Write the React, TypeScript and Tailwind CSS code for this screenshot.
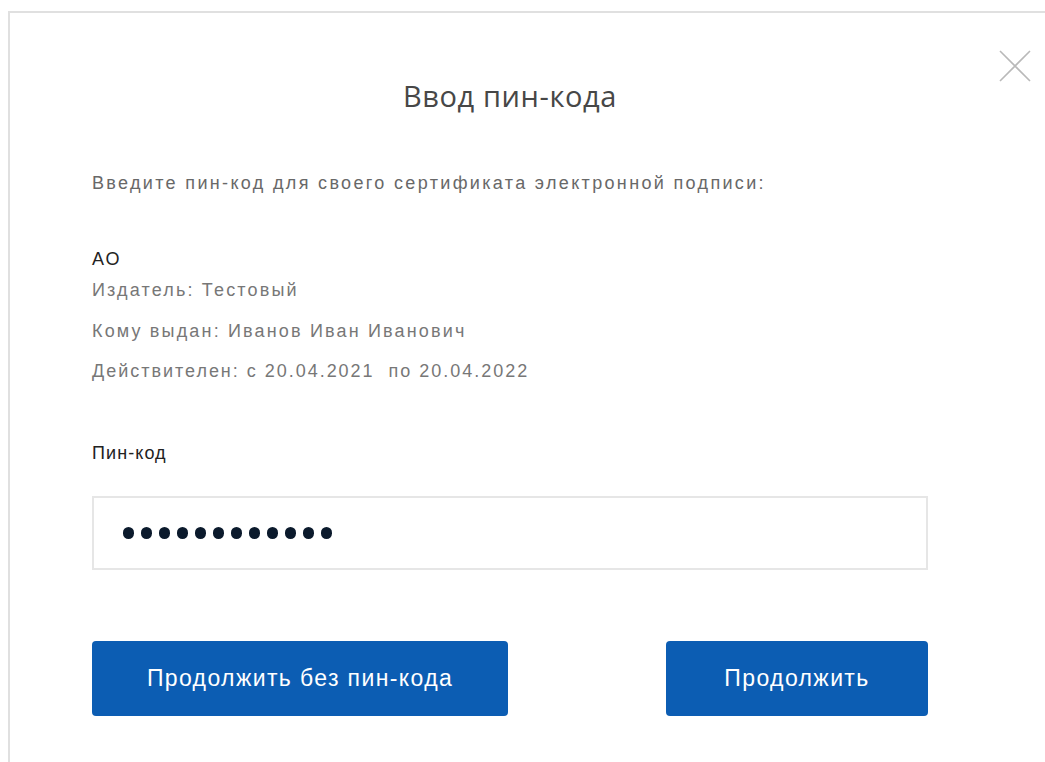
const body = { fontFamily: '"Liberation Sans", Arial, sans-serif' };

function CloseIcon() {
  return (
    <svg width="32" height="32" viewBox="0 0 32 32" fill="none">
      <path d="M1 1L31 31M31 1L1 31" stroke="#b9b9b9" strokeWidth="1.6" />
    </svg>
  );
}

function Dots({ count }: { count: number }) {
  return (
    <div className="flex gap-[7px]">
      {Array.from({ length: count }).map((_, i) => (
        <span key={i} className="block w-[11px] h-[12px] rounded-full bg-[#0b1a2c]" />
      ))}
    </div>
  );
}

export default function App() {
  return (
    <div className="min-h-screen bg-white pt-[11px] pl-[8px]" style={body}>
      <div className="relative min-h-[751px] border-t-2 border-l-2 border-[#e0e0e0] pt-[67px] pl-[82px]">
        <button className="absolute top-[37px] right-[14px]">
          <CloseIcon />
        </button>

        <div className="w-[836px]">
          <h2
            className="text-center text-[29px] leading-[32px] tracking-[0.02em] text-[#474747]"
            style={{ fontFamily: '"Open Sans", sans-serif' }}
          >
            Ввод пин-кода
          </h2>

          <p className="mt-[59px] text-[18px] leading-[24px] tracking-[0.13em] text-[#686868]">
            Введите пин-код для своего сертификата электронной подписи:
          </p>

          <p className="mt-[52px] text-[18px] leading-[24px] tracking-[0.1em] text-[#222]">АО</p>
          <p className="mt-[7px] text-[18px] leading-[24px] tracking-[0.12em] text-[#777]">
            Издатель: Тестовый
          </p>
          <p className="mt-[17px] text-[18px] leading-[24px] tracking-[0.12em] text-[#777]">
            Кому выдан: Иванов Иван Иванович
          </p>
          <p className="mt-[16px] text-[18px] leading-[24px] tracking-[0.11em] text-[#777]">
            Действителен: с 20.04.2021&nbsp; по 20.04.2022
          </p>

          <p className="mt-[58px] text-[18px] leading-[24px] tracking-[0.06em] text-[#222]">Пин-код</p>

          <div className="mt-[31px] h-[74px] border-2 border-[#e6e6e6] flex items-center pl-[29px]">
            <Dots count={12} />
          </div>

          <div className="mt-[71px] flex justify-between">
            <button className="w-[416px] h-[75px] rounded-[4px] bg-[#0c5db3] text-white text-[23px] tracking-[0.06em]">
              Продолжить без пин-кода
            </button>
            <button className="w-[262px] h-[75px] rounded-[4px] bg-[#0c5db3] text-white text-[23px] tracking-[0.06em]">
              Продолжить
            </button>
          </div>
        </div>
      </div>
    </div>
  );
}
